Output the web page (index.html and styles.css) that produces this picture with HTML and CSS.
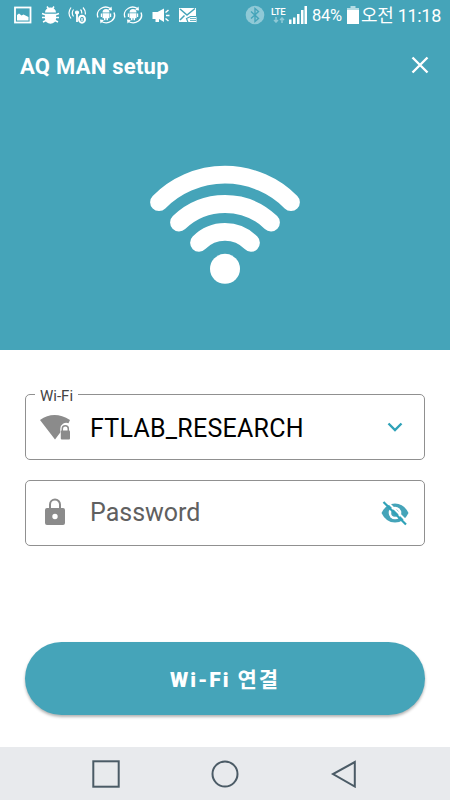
FILE: index.html
```html
<!DOCTYPE html>
<html lang="ko">
<head>
  <meta charset="UTF-8" />
  <meta name="viewport" content="width=device-width, initial-scale=1.0" />
  <title>AQ MAN setup</title>
  <link rel="stylesheet" href="styles.css">
</head>
<body>
  <div class="hero">
    <div class="status-bar">
      <div class="status-left">
        <svg class="status-icon" viewBox="0 0 20 20">
          <rect x="2" y="2.500" width="15.500" height="15" fill="none" stroke="#fff" stroke-width="1.800" />
          <path d="M4 15.500V10l2-1.500 2.500 2 2-1 5 2.500v3.500z" fill="#fff" />
        </svg>
        <svg class="status-icon" viewBox="0 0 20 20" fill="#fff">
          <path d="M4 7.500a5.500 5 0 0 1 11 0zM4 8.700h11v5a5.500 5 0 0 1-11 0z" />
          <path d="M6 1.500l2 3M13 1.500l-2 3M1 8.500l4 1.500M18 8.500l-4 1.500M1 12.500h17M2 17l4-2M17 17l-4-2" fill="none" stroke="#fff" stroke-width="1.500" />
        </svg>
        <svg class="status-icon" viewBox="0 0 20 20" fill="none" stroke="#fff" stroke-width="1.200">
          <path d="M3 2.500q-4 5.500 0 11M5.500 4.500q-2.500 3.500 0 7M15 2.500q3 3.500 2.200 7M12.500 4.500q1.500 1.500 1.200 4" />
          <circle cx="9" cy="7.500" r="1.500" fill="#fff" />
          <path d="M9 8v9" stroke-width="1.800" />
          <ellipse cx="14" cy="14.200" rx="3" ry="3.500" stroke-width="2" />
          <path d="M14 13v3" />
        </svg>
        <svg class="status-icon" viewBox="0 0 20 20">
          <path d="M2 12.500A8 7.500 0 0 1 5 3.500Q9.500.5 14.500 3.500M18 7.500a8 7.500 0 0 1-2.500 8.500Q10.500 19.500 5.500 16.500" fill="none" stroke="#fff" stroke-width="1.400" />
          <path d="M15.500 1.500l.5 4-4-.5zM4.500 18.500l-.5-4 4 .5z" fill="#fff" />
          <path d="M6.500 7.500a3.500 3.500 0 0 1 7 0zM6.500 8.200h7v5h-1.500v2h-1.500v-2h-1v2H8v-2H6.500zM4.800 8.500h1.200v3.500H4.800zM14 8.500h1.200v3.500H14z" fill="#fff" />
        </svg>
        <svg class="status-icon" viewBox="0 0 20 20">
          <path d="M2 12.500A8 7.500 0 0 1 5 3.500Q9.500.5 14.500 3.500M18 7.500a8 7.500 0 0 1-2.500 8.500Q10.500 19.500 5.500 16.500" fill="none" stroke="#fff" stroke-width="1.400" />
          <path d="M15.500 1.500l.5 4-4-.5zM4.500 18.500l-.5-4 4 .5z" fill="#fff" />
          <path d="M6.500 7.500a3.500 3.500 0 0 1 7 0zM6.500 8.200h7v5h-1.500v2h-1.500v-2h-1v2H8v-2H6.500zM4.800 8.500h1.200v3.500H4.800zM14 8.500h1.200v3.500H14z" fill="#fff" />
        </svg>
        <svg class="status-icon" viewBox="0 0 20 20">
          <path d="M1.500 7h5L13 3.500v13.500l-5-3v3H4.500v-3h-3z" fill="#fff" />
          <path d="M14.500 7.500L17.500 5M15 10.500h3.500M14.500 13.500l3 2.500" stroke="#fff" stroke-width="1.500" />
        </svg>
        <svg class="status-icon" viewBox="0 0 20 20">
          <path d="M1 3h17v14H1z" fill="#fff" />
          <path d="M2 4l7 6 8-6.500M2 15l4.500-4.500" fill="none" stroke="#45a4b9" stroke-width="1.500" />
          <path d="M18.500 11.500h-6l-4 2 1.500 4h8.500" fill="#fff" stroke="#45a4b9" stroke-width="1.200" />
          <path d="M12 13.500h6M12 15.500h6" stroke="#45a4b9" stroke-width=".8" />
        </svg>
      </div>

      <div class="status-right">
        <svg class="bluetooth" viewBox="0 0 20 20">
          <circle cx="10" cy="10" r="9.300" fill="#8fc9d6" />
          <path d="M6 6.500l7.500 7L10 16.500v-13l3.500 3L6 13.500" fill="none" stroke="#45a4b9" stroke-width="1.400" />
        </svg>
        <div class="network">
          <span>LTE</span>
          <svg class="traffic" viewBox="0 0 12 6">
            <path d="M3 0v5M1 3l2 2 2-2M9 6V1M7 3l2-2 2 2" fill="none" stroke="#8fc9d6" stroke-width="1.500" />
          </svg>
        </div>
        <svg class="signal" viewBox="0 0 18 18" fill="#fff">
          <path d="M0 13.500h2.500V18H0zM4 11.500h2.500V18H4zM8 8h2.500v10H8zM12 4h2.500v14H12zM15.500 0H18v18h-2.500z" />
        </svg>
        <span class="battery-level">84%</span>
        <svg class="battery" viewBox="0 0 12 18">
          <path d="M3.500 0h5v2H12v4H0V2h3.500z" fill="#b5dce4" />
          <path d="M0 4h12v14H0z" fill="#fff" />
        </svg>
        <span class="clock">오전 11:18</span>
      </div>
    </div>

    <div class="title-bar">
      <h1>AQ MAN setup</h1>
      <svg class="close" viewBox="0 0 18 18">
        <path d="M1.500 1.500l15 15M16.500 1.500l-15 15" stroke="#fff" stroke-width="2.400" />
      </svg>
    </div>

    <svg class="wifi-logo" viewBox="0 0 150 120">
      <g fill="none" stroke="#fff" stroke-width="17.800" stroke-linecap="round">
        <path d="M9 37.200a93 93 0 0 1 132 0" />
        <path d="M29 57.500a66.400 66.400 0 0 1 92 0" />
        <path d="M49 77.800a36.500 36.500 0 0 1 52 0" />
      </g>
      <circle cx="75" cy="103.800" r="15" fill="#fff" />
    </svg>
  </div>

  <div class="form">
    <div class="field">
      <span class="field-label">Wi-Fi</span>
      <svg class="field-icon" viewBox="0 0 32 32">
        <path d="M16 29.500L1 10Q15 0 31 10l-1.500 3.200a6 6 0 0 0-8.200 5.500v3.800z" fill="#8b8b8b" />
        <path d="M23.300 21v-2.300a3 3 0 0 1 6 0V21" fill="none" stroke="#8b8b8b" stroke-width="1.500" />
        <rect x="21.800" y="20.500" width="9.200" height="9" rx="1" fill="#8b8b8b" />
      </svg>
      <span class="network-name">FTLAB_RESEARCH</span>
      <svg class="chevron" viewBox="0 0 16 10">
        <path d="M1.500 1.500L8 8l6.500-6.500" fill="none" stroke="#2fa2b8" stroke-width="2.400" />
      </svg>
    </div>

    <div class="field">
      <svg class="field-icon" viewBox="0 0 32 32">
        <path d="M11 13V8.500a5 5 0 0 1 10 0V13" fill="none" stroke="#8b8b8b" stroke-width="2" />
        <path fill-rule="evenodd" d="M8 12h16a2 2 0 0 1 2 2v13a2 2 0 0 1-2 2H8a2 2 0 0 1-2-2V14a2 2 0 0 1 2-2zM16 17.800a2.700 2.700 0 1 0 0 5.400 2.700 2.700 0 0 0 0-5.400z" fill="#8b8b8b" />
      </svg>
      <span class="placeholder">Password</span>
      <svg class="eye-off" viewBox="0 0 28 26">
        <path d="M.5 13Q5 3.500 14 3.500T27.500 13Q23 22.500 14 22.500T.5 13z" fill="#45a4b9" />
        <circle cx="14" cy="13" r="6.300" fill="#fff" />
        <circle cx="14" cy="13" r="3.800" fill="#45a4b9" />
        <path d="M4.500 0l22 22" stroke="#fff" stroke-width="2" />
        <path d="M2.500 2L25 24.500" stroke="#2fa2b8" stroke-width="2.200" />
      </svg>
    </div>

    <button class="connect-btn">Wi-Fi <span>연결</span></button>
  </div>

  <div class="nav-bar">
    <svg class="nav-icon" viewBox="0 0 28 28"><rect x="1.300" y="1.300" width="25.400" height="25.400" /></svg>
    <svg class="nav-icon" viewBox="0 0 28 28"><circle cx="14" cy="14" r="12.500" /></svg>
    <svg class="nav-icon" viewBox="0 0 28 28"><path d="M24.800 2v24.500L3 14z" /></svg>
  </div>
</body>
</html>
```

FILE: styles.css
```css
* {
  box-sizing: border-box;
}

body {
  font-family: Roboto, 'Noto Sans CJK KR', sans-serif;
  background-color: #fff;
  margin: 0;
  height: 800px;
  display: flex;
  flex-direction: column;
  overflow: hidden;
}

svg {
  display: block;
  flex-shrink: 0;
}

.hero {
  height: 350px;
  background-color: #45a4b9;
  color: #fff;
}

.status-bar {
  height: 30px;
  display: flex;
  justify-content: space-between;
  align-items: center;
  padding: 0 9px 0 13px;
}

.status-left {
  display: flex;
  gap: 7.5px;
}

.status-icon {
  width: 20px;
  height: 20px;
}

.status-right {
  display: flex;
  align-items: center;
  white-space: nowrap;
}

.bluetooth {
  width: 20px;
  height: 20px;
  margin-right: 6px;
}

.network {
  width: 15px;
  margin-right: 3px;
  font-size: 9.5px;
  line-height: 9px;
  font-weight: 500;
  letter-spacing: -0.2px;
}

.traffic {
  width: 12px;
  height: 6px;
  margin: 1px 0 0 2px;
}

.signal {
  width: 18px;
  height: 18px;
  margin-right: 5px;
}

.battery-level {
  width: 35px;
  font-size: 16.5px;
  line-height: 20px;
  padding-top: 1px;
  letter-spacing: -0.3px;
}

.battery {
  width: 12px;
  height: 18px;
  margin-right: 2px;
}

.clock {
  font-size: 18px;
  line-height: 24px;
  padding-top: 2px;
  letter-spacing: -0.3px;
}

.title-bar {
  height: 70px;
  display: flex;
  justify-content: space-between;
  align-items: center;
  padding: 0 21px 0 20px;
}

.title-bar h1 {
  margin: 0;
  padding-top: 2px;
  font-size: 22px;
  font-weight: 700;
  letter-spacing: 0.25px;
}

.close {
  width: 18px;
  height: 18px;
}

.wifi-logo {
  width: 150px;
  height: 120px;
  margin: 65px auto 0;
}

.form {
  flex: 1;
  padding: 44px 25px 0;
}

.field {
  position: relative;
  height: 66px;
  display: flex;
  align-items: center;
  padding: 0 15px 0 13px;
  border: 1px solid #909090;
  border-radius: 5px;
  margin-bottom: 20px;
}

.field-label {
  position: absolute;
  top: -8px;
  left: 9px;
  padding: 0 5px;
  background-color: #fff;
  font-size: 15px;
  line-height: 18px;
  color: #444;
}

.field-icon {
  width: 32px;
  height: 32px;
  margin: 0 19px 2px 0;
}

.network-name,
.placeholder {
  flex: 1;
  font-size: 25px;
  color: #000;
}

.network-name {
  padding-top: 2px;
  letter-spacing: 0.25px;
}

.placeholder {
  padding-bottom: 1px;
  color: #606060;
}

.chevron {
  width: 16px;
  height: 10px;
  margin-right: 6px;
}

.eye-off {
  width: 28px;
  height: 26px;
}

.connect-btn {
  display: block;
  width: 100%;
  height: 73px;
  margin-top: 96px;
  padding: 0 0 2px;
  border: none;
  border-radius: 37px;
  background-color: #45a4b9;
  box-shadow: 0 2px 3px rgba(0, 0, 0, 0.3);
  color: #fff;
  font-family: inherit;
  font-size: 21px;
  font-weight: 900;
  letter-spacing: 1.9px;
}

.connect-btn span {
  font-weight: 700;
}

.nav-bar {
  height: 53px;
  display: flex;
  justify-content: center;
  align-items: center;
  gap: 91px;
  background-color: #e8eaed;
}

.nav-icon {
  width: 28px;
  height: 28px;
  fill: none;
  stroke: #4b5b66;
  stroke-width: 2;
}
```
